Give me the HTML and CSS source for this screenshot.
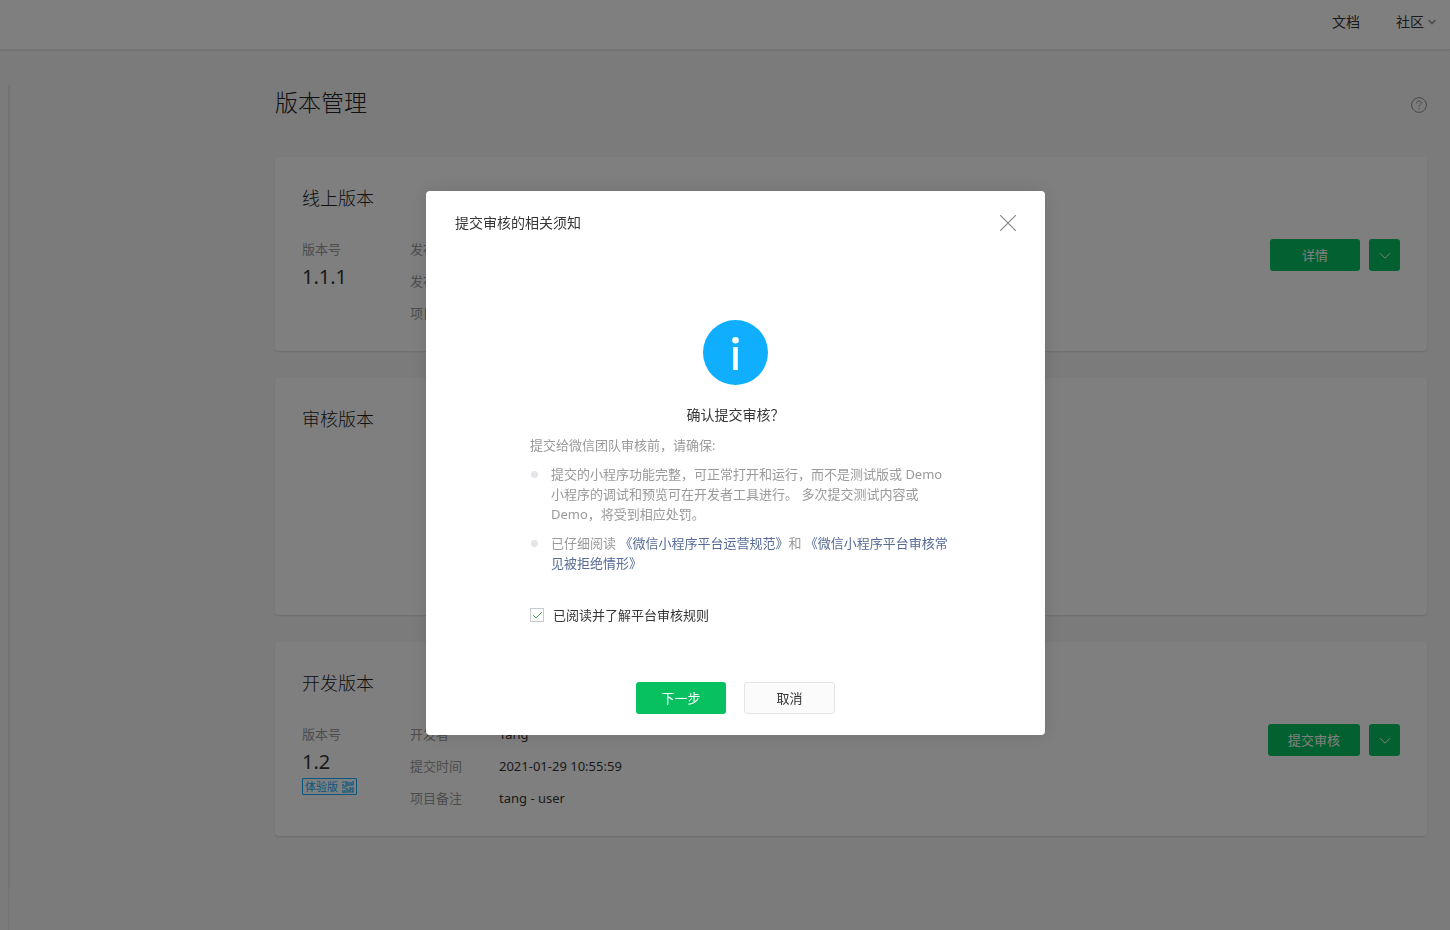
FILE: index.html
```html
<!DOCTYPE html>
<html lang="zh-CN">
<head>
    <meta charset="UTF-8">
    <meta name="viewport" content="width=device-width, initial-scale=1.0">
    <title>版本管理</title>
    <link rel="stylesheet" href="styles.css">
</head>
<body>
    <header class="header">
        <a href="#" class="header-link">文档</a>
        <a href="#" class="header-link">社区
            <svg width="8" height="6" viewBox="0 0 8 6"><path d="M0.7 1l3.3 3.6L7.3 1" fill="none" stroke="#999" stroke-width="1.6"/></svg>
        </a>
    </header>

    <div class="layout">
        <aside class="sidebar"><div class="sidebar-track"></div></aside>
        <main class="content">
            <div class="page-head">
                <h1>版本管理</h1>
                <a href="#" class="help" aria-label="帮助">
                    <svg width="16" height="16" viewBox="0 0 16 16" fill="none" stroke="#8f8f8f"><circle cx="8" cy="8" r="7.4"/><path d="M5.6 6.4C5.6 4.800 6.600 4 8 4s2.400.8 2.400 2.200c0 1.800-2.400 1.800-2.400 3.600"/><path d="M8 11v1.400"/></svg>
                </a>
            </div>

            <section class="card">
                <h2>线上版本</h2>
                <div class="card-body">
                    <div class="version">
                        <div class="label">版本号</div>
                        <div class="version-number">1.1.1</div>
                    </div>
                    <dl class="info">
                        <dt>发布者</dt><dd></dd>
                        <dt>发布时间</dt><dd></dd>
                        <dt>项目备注</dt><dd></dd>
                    </dl>
                    <div class="actions">
                        <button class="btn btn-primary">详情</button>
                        <button class="btn btn-primary btn-more" aria-label="更多">
                            <svg width="12" height="8" viewBox="0 0 12 8"><path d="M1 1.2l5 5 5-5" fill="none" stroke="#fff"/></svg>
                        </button>
                    </div>
                </div>
            </section>

            <section class="card card-empty">
                <h2>审核版本</h2>
            </section>

            <section class="card">
                <h2>开发版本</h2>
                <div class="card-body">
                    <div class="version">
                        <div class="label">版本号</div>
                        <div class="version-number">1.2</div>
                        <a href="#" class="trial">体验版
                            <svg width="12" height="12" viewBox="0 0 12 12" fill="none" stroke="#10aeff" stroke-width="1.200"><path d="M0 1h5v4H1V3M3 3h1M7 1v4M9 1v3h2V0M0 7h4M1 9v3M3 9v3M5 7v5M7 7h2v2H7v2h4V6"/></svg>
                        </a>
                    </div>
                    <dl class="info">
                        <dt>开发者</dt><dd>Tang</dd>
                        <dt>提交时间</dt><dd>2021-01-29 10:55:59</dd>
                        <dt>项目备注</dt><dd>tang - user</dd>
                    </dl>
                    <div class="actions">
                        <button class="btn btn-primary">提交审核</button>
                        <button class="btn btn-primary btn-more" aria-label="更多">
                            <svg width="12" height="8" viewBox="0 0 12 8"><path d="M1 1.2l5 5 5-5" fill="none" stroke="#fff"/></svg>
                        </button>
                    </div>
                </div>
            </section>
        </main>
    </div>

    <div class="mask">
        <div class="dialog" role="dialog" aria-labelledby="dialog-title">
            <div class="dialog-head">
                <h3 id="dialog-title">提交审核的相关须知</h3>
                <button class="dialog-close" aria-label="关闭">
                    <svg width="16" height="16" viewBox="0 0 16 16"><path d="M0 0l16 16M16 0L0 16" stroke="#888" stroke-width="1.2"/></svg>
                </button>
            </div>
            <div class="dialog-body">
                <svg class="info-icon" width="65" height="65" viewBox="0 0 65 65"><circle cx="32.5" cy="32.5" r="32.5" fill="#10aeff"/><circle cx="32.5" cy="20.3" r="3.3" fill="#fff"/><path d="M30.2 27h4.600v23h-4.600z" fill="#fff"/></svg>
                <p class="confirm">确认提交审核？</p>
                <div class="notice">
                    <p>提交给微信团队审核前，请确保:</p>
                    <ul>
                        <li>提交的小程序功能完整，可正常打开和运行，而不是测试版或 Demo 小程序的调试和预览可在开发者工具进行。 多次提交测试内容或 Demo，将受到相应处罚。</li>
                        <li>已仔细阅读 <a href="#">《微信小程序平台运营规范》</a>和 <a href="#">《微信小程序平台审核常见被拒绝情形》</a></li>
                    </ul>
                    <label class="agree"><input type="checkbox" checked>已阅读并了解平台审核规则</label>
                </div>
            </div>
            <div class="dialog-foot">
                <button class="btn btn-primary">下一步</button>
                <button class="btn btn-default">取消</button>
            </div>
        </div>
    </div>
</body>
</html>
```
FILE: styles.css
```css
* {
    box-sizing: border-box;
}
body {
    margin: 0;
    min-height: 100vh;
    display: flex;
    flex-direction: column;
    font-family: "Noto Sans", "Noto Sans CJK SC", sans-serif;
    font-size: 13px;
    line-height: 20px;
    color: #353535;
    background-color: #f7f7f7;
}
h1, h2, h3, p, ul, dl, dd {
    margin: 0;
    padding: 0;
    font-weight: 400;
}
a {
    color: #576b95;
    text-decoration: none;
}
.header {
    display: flex;
    justify-content: flex-end;
    align-items: center;
    gap: 36px;
    height: 50px;
    padding: 0 14px 5px 0;
    background-color: #fff;
    border-bottom: 1px solid #e4e4e4;
    box-shadow: 0 1px 2px rgba(0, 0, 0, 0.06);
}
.header-link {
    display: flex;
    align-items: center;
    gap: 4px;
    font-size: 14px;
    color: #353535;
}
.layout {
    flex: 1;
    display: flex;
    padding: 35px 23px 0 8px;
}
.sidebar {
    flex: 0 0 267px;
    border-left: 1px solid #e7e7e7;
}
.sidebar-track {
    width: 1px;
    height: 804px;
    background-color: #e7e7e7;
}
.content {
    flex: 1;
}
.page-head {
    display: flex;
    justify-content: space-between;
    align-items: center;
    margin-bottom: 38px;
}
.page-head h1 {
    font-size: 23px;
    font-weight: 300;
    line-height: 34px;
    color: #222;
}
.help {
    height: 16px;
    margin-top: 6px;
}
.help svg {
    display: block;
}
.card {
    padding: 27px 27px 25px;
    margin-bottom: 27px;
    background-color: #fff;
    border-radius: 4px;
    box-shadow: 0 1px 2px rgba(0, 0, 0, 0.12);
}
.card h2 {
    font-size: 18px;
    font-weight: 300;
    line-height: 28px;
    margin-bottom: 24px;
    color: #222;
}
.card-empty {
    min-height: 237px;
}
.card-body {
    display: flex;
    align-items: flex-start;
}
.version {
    width: 108px;
}
.label {
    line-height: 26px;
    color: #9a9a9a;
}
.version-number {
    font-size: 20px;
    line-height: 30px;
}
.trial {
    display: inline-flex;
    align-items: center;
    gap: 4px;
    height: 17px;
    margin-top: 1px;
    padding: 0 2px;
    border: 1px solid #10aeff;
    border-radius: 1px;
    font-size: 11px;
    line-height: 15px;
    color: #10aeff;
    vertical-align: top;
}
.info {
    flex: 1;
    display: grid;
    grid-template-columns: 89px 1fr;
    row-gap: 6px;
    line-height: 26px;
}
.info dt {
    color: #9a9a9a;
}
.actions {
    display: flex;
    gap: 9px;
    padding-top: 3px;
}
.btn {
    min-width: 90px;
    height: 32px;
    padding: 0 20px;
    border: 0;
    border-radius: 3px;
    font-family: inherit;
    font-size: 13px;
    line-height: 20px;
    cursor: pointer;
}
.btn-primary {
    background-color: #07c160;
    color: #fff;
}
.btn-default {
    min-width: 91px;
    background-color: #fbfbfb;
    border: 1px solid #e4e4e4;
    color: #353535;
}
.btn-more {
    min-width: 31px;
    padding: 0;
}
.mask {
    position: fixed;
    inset: 0;
    display: flex;
    justify-content: center;
    align-items: center;
    padding: 0 0 4px 21px;
    background-color: rgba(0, 0, 0, 0.5);
}
.dialog {
    width: 619px;
    background-color: #fff;
    border-radius: 4px;
    box-shadow: 0 0 18px rgba(0, 0, 0, 0.12);
}
.dialog-head {
    display: flex;
    justify-content: space-between;
    align-items: center;
    height: 64px;
    padding: 0 29px;
}
.dialog-head h3 {
    font-size: 14px;
}
.dialog-close {
    height: 16px;
    padding: 0;
    border: 0;
    background: none;
    cursor: pointer;
}
.dialog-close svg {
    display: block;
}
.dialog-body {
    padding: 65px 0 57px;
}
.info-icon {
    display: block;
    margin: 0 auto 20px;
}
.confirm {
    margin-bottom: 10px;
    font-size: 14px;
    text-align: center;
}
.notice {
    padding: 0 94px 0 104px;
    color: #9a9a9a;
}
.notice ul {
    list-style: none;
}
.notice li {
    position: relative;
    margin-top: 9px;
    padding-left: 21px;
}
.notice li::before {
    content: "";
    position: absolute;
    left: 1px;
    top: 7px;
    width: 7px;
    height: 7px;
    border-radius: 50%;
    background-color: #e4e5e8;
}
.agree {
    display: flex;
    align-items: center;
    gap: 9px;
    margin-top: 32px;
    color: #353535;
}
.agree input {
    appearance: none;
    width: 14px;
    height: 14px;
    margin: 0;
    border: 1px solid #c9cbd2;
    background-color: #fff;
}
.agree input:checked {
    background-image: url("data:image/svg+xml,%3Csvg xmlns='http://www.w3.org/2000/svg' viewBox='0 0 12 12'%3E%3Cpath d='M2 6l3 3 6-6' fill='none' stroke='%2346b450'/%3E%3C/svg%3E");
}
.dialog-foot {
    display: flex;
    justify-content: center;
    gap: 18px;
    padding-bottom: 21px;
}
```
